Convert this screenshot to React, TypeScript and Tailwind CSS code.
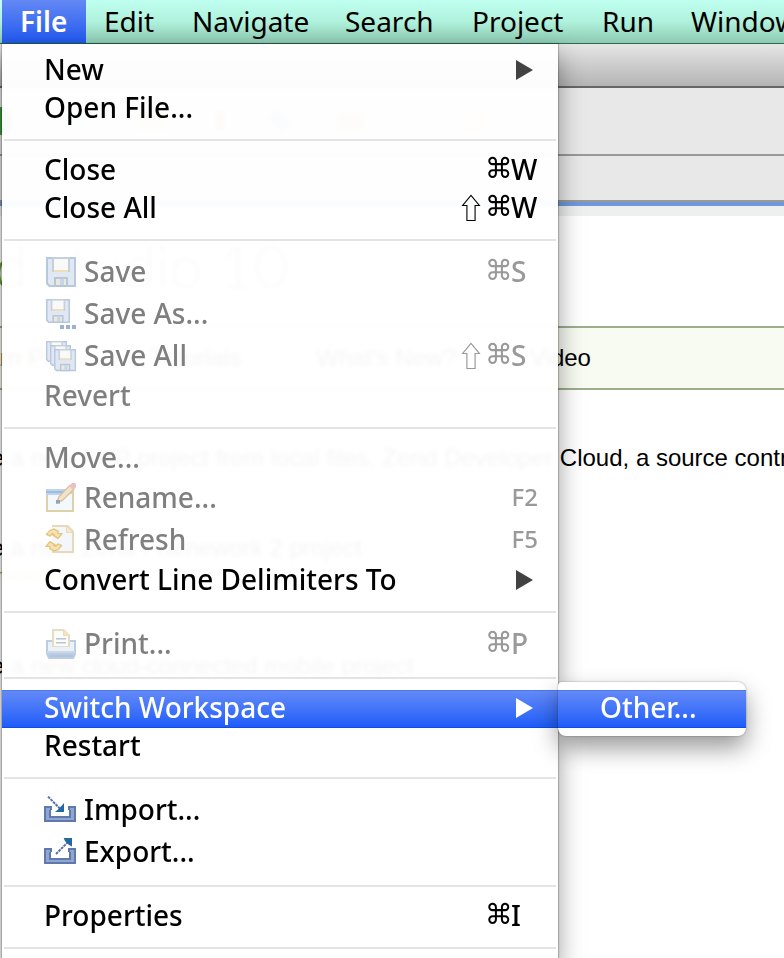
import React from "react";

type IconName = "save" | "saveAs" | "saveAll" | "rename" | "refresh" | "print" | "import" | "export";

type Entry =
  | { kind: "separator" }
  | {
      kind: "item";
      label: string;
      icon?: IconName;
      disabled?: boolean;
      shift?: boolean;
      command?: boolean;
      shortcut?: string;
      submenu?: string[];
      open?: boolean;
    };

const separator: Entry = { kind: "separator" };

const entries: Entry[] = [
  { kind: "item", label: "New", submenu: [] },
  { kind: "item", label: "Open File..." },
  separator,
  { kind: "item", label: "Close", command: true, shortcut: "W" },
  { kind: "item", label: "Close All", shift: true, command: true, shortcut: "W" },
  separator,
  { kind: "item", label: "Save", icon: "save", disabled: true, command: true, shortcut: "S" },
  { kind: "item", label: "Save As...", icon: "saveAs", disabled: true },
  { kind: "item", label: "Save All", icon: "saveAll", disabled: true, shift: true, command: true, shortcut: "S" },
  { kind: "item", label: "Revert", disabled: true },
  separator,
  { kind: "item", label: "Move...", disabled: true },
  { kind: "item", label: "Rename...", icon: "rename", disabled: true, shortcut: "F2" },
  { kind: "item", label: "Refresh", icon: "refresh", disabled: true, shortcut: "F5" },
  { kind: "item", label: "Convert Line Delimiters To", submenu: [] },
  separator,
  { kind: "item", label: "Print...", icon: "print", disabled: true, command: true, shortcut: "P" },
  separator,
  { kind: "item", label: "Switch Workspace", submenu: ["Other..."], open: true },
  { kind: "item", label: "Restart" },
  separator,
  { kind: "item", label: "Import...", icon: "import" },
  { kind: "item", label: "Export...", icon: "export" },
  separator,
  { kind: "item", label: "Properties", command: true, shortcut: "I" },
  separator,
];

function Floppy() {
  return (
    <>
      <path d="M0 0h15v15H1.5L0 13.5z" fill="#b8c8de" />
      <path d="M1 1h13v13H2l-1-1z" fill="#dfe8f3" />
      <path d="M3 0h9v7.5H3z" fill="#c6d0d8" />
      <path d="M4 1h7v5.5H4z" fill="#f8f9f8" />
      <path d="M4 6.5h7v1H4z" fill="#efdfb9" />
      <path d="M4 10h7v5H4z" fill="#b7c6da" />
      <path d="M5 11h5v3H5z" fill="#f1e8d4" />
      <path d="M7 11h2v3H7z" fill="#c3d6ec" />
    </>
  );
}

function Tray() {
  return (
    <>
      <path d="M0 6h4v2H3.500v3h9V8H12V6h4v8H0z" fill="#6079aa" />
      <path d="M1 7h2v1h-.5v4h11V8H13V7h2v6H1z" fill="#8fa5d2" />
    </>
  );
}

function Icon({ name }: { name: IconName }) {
  return (
    <svg viewBox="0 0 16 16" className="h-8 w-8 shrink-0" aria-hidden="true">
      {name === "save" && (
        <g transform="translate(1 .5)">
          <Floppy />
        </g>
      )}
      {name === "saveAs" && (
        <>
          <g transform="translate(1 .5) scale(.8)">
            <Floppy />
          </g>
          <path d="M8 13.500h2v2H8zM11 13.500h2v2h-2zM14 13.500h2v2h-2z" fill="#9db1d2" />
        </>
      )}
      {name === "saveAll" && (
        <>
          <g transform="translate(1 .5) scale(.7)">
            <Floppy />
          </g>
          <g transform="translate(3 2.5) scale(.7)">
            <Floppy />
          </g>
          <g transform="translate(5 4.5) scale(.74)">
            <Floppy />
          </g>
        </>
      )}
      {name === "rename" && (
        <>
          <path d="M1 3.5h14V15H1z" fill="#ddd0ac" />
          <path d="M2 6h12v8H2z" fill="#f3f8fd" />
          <path d="M1 3.500h11v3H1z" fill="#bdd4ea" />
          <path d="M1 4.500h9v1H1z" fill="#9dbddf" />
          <path d="M6.500 10.500l.8-3L13 1.500l2 2-5.800 5.700z" fill="#f1e2ca" stroke="#d8bf9f" strokeWidth=".6" />
          <path d="M12.500 2L14 .5h1.500l.5.500V2.500L14.700 4z" fill="#ecc0c0" />
          <path d="M6 9h2v1.800H6z" fill="#94a2b8" />
        </>
      )}
      {name === "refresh" && (
        <>
          <path d="M4 .5h8l3 3v11H4z" fill="#e6dab9" />
          <path d="M4 1.500h7v3h3v9H4z" fill="#f3f6fa" />
          <path d="M11.500 1.500v2.500h2.500z" fill="#f5ead0" />
          <g fill="#f6e3b4" stroke="#e6c47c" strokeWidth=".7" strokeLinejoin="round">
            <path d="M1.200 5.200L3 3.200 5 2.600 7 3.600v1.200h2L7 7.200 4.200 5.300h1L4.200 4.800 3 6z" />
            <path d="M8.800 10.800L7 12.800 5 13.400 3 12.400v-1.200H1L3 8.800l2.800 1.900h-1l1 .5L7 10z" />
          </g>
        </>
      )}
      {name === "print" && (
        <>
          <path d="M1 6h15v7l-1 2.500H2.200L1 13z" fill="#bccce1" />
          <path d="M2 7h13v5H2z" fill="#eaf1f8" />
          <path d="M1.500 11.500h14v1h-14z" fill="#c9d8ea" />
          <path d="M2.500 13.500h12v1h-12z" fill="#afc4dd" />
          <path d="M4 .5h6L13 3.500v6H4z" fill="#e4dcc3" />
          <path d="M5 1.500h4.500V4H12v5H5z" fill="#fbfbf8" />
          <path d="M10 .8V3.500h2.700z" fill="#f2e3b8" />
          <path d="M6 5h5v.8H6zM6 7h5v.8H6z" fill="#bac6d8" />
        </>
      )}
      {name === "import" && (
        <>
          <Tray />
          <path d="M2 1.300l6.500 6.500" stroke="#5b6fae" strokeWidth="1" strokeDasharray="1.400 .4" />
          <path d="M10 4.500V9H5.500L7 7.700 8.500 6.200z" fill="#23699f" />
        </>
      )}
      {name === "export" && (
        <>
          <Tray />
          <path d="M6 9l6-6" stroke="#5b6fae" strokeWidth="1" strokeDasharray="1.400 .4" />
          <path d="M9.800 1H14v4.200l-1.500-.7-2-2z" fill="#23699f" />
        </>
      )}
    </svg>
  );
}

function MenuRow({ entry }: { entry: Entry }) {
  if (entry.kind === "separator") {
    return <li role="separator" className="mx-[2px] my-[11px] h-[2px] bg-[#e3e3e3]" />;
  }
  const { label, icon, disabled, shift, command, shortcut, submenu, open } = entry;
  const tone = open
    ? "border-t border-b border-t-[#4f78e6] border-b-[#0d4de6] bg-linear-to-b from-[#6389f8] to-[#1c5cf9] text-white"
    : disabled
      ? "text-[#7f7f7f]"
      : "text-black";
  const keyTone = disabled ? "text-[#999]" : "text-black";
  return (
    <li role="none" className="relative">
      <button
        type="button"
        role="menuitem"
        disabled={disabled}
        className={`flex w-full items-center gap-2 pr-5 pb-[2px] pl-[42px] text-left whitespace-nowrap ${icon ? "h-[42px]" : "h-[38px]"} ${tone}`}
      >
        {icon && <Icon name={icon} />}
        <span className="flex-1 pb-[2px]">{label}</span>
        {submenu && (
          <svg viewBox="0 0 17 20" className="mr-[5px] h-5 w-[17px]" aria-hidden="true">
            <path d="M0 0l17 10L0 20z" fill={open ? "#fff" : "#424242"} />
          </svg>
        )}
        {shortcut && (
          <span className={`flex items-center pb-[2px] ${keyTone}`}>
            {shift && <span className="w-7 font-['Noto_Sans_CJK_JP','DejaVu_Sans',sans-serif]">⇧</span>}
            {command && <span className="w-[26px] font-['DejaVu_Sans',sans-serif]">⌘</span>}
            {command ? <span className="w-[27px]">{shortcut}</span> : <span className="text-2xl">{shortcut}</span>}
          </span>
        )}
      </button>
      {open && submenu && (
        <ul
          role="menu"
          className="absolute -top-2 left-full w-[188px] rounded-lg rounded-tl-sm bg-white py-2 shadow-[0_0_2px_rgba(0,0,0,0.4),0_12px_24px_rgba(0,0,0,0.4)]"
        >
          {submenu.map((child) => (
            <li key={child} role="none">
              <button type="button" role="menuitem" className={`flex h-[38px] w-full items-center pb-1 pl-[42px] text-left ${tone}`}>
                {child}
              </button>
            </li>
          ))}
        </ul>
      )}
    </li>
  );
}

function Workbench() {
  return (
    <main className="font-['Liberation_Sans',Arial,sans-serif] text-2xl whitespace-nowrap text-black">
      <div className="h-11 border-b-2 border-[#666] bg-linear-to-b from-[#e6e6e6] to-[#b4b4b4]" />
      <div className="flex h-[68px] items-center gap-12 border-b-2 border-[#999] bg-[#e8e8e8]">
        <span className="h-7 w-3 rounded-r-full bg-[#3d9a3d]" />
        <span className="h-5 w-7 bg-[#c9d6e6]" />
        <span className="h-6 w-8 bg-[#e8cf9a]" />
        <span className="h-5 w-2 bg-[#c08a4a]" />
        <span className="h-6 w-4 -rotate-45 bg-[#9fb6da]" />
        <span className="h-5 w-7 bg-[#e0b878]" />
        <span className="ml-12 h-6 w-8 rounded-full bg-[#f0d9a8]" />
      </div>
      <div className="h-[46px] border-b-2 border-[#999] bg-[#e8e8e8]" />
      <div className="h-1 bg-[#6f98dc]" />
      <div className="h-[10px] bg-[#eeefef]" />
      <h1 className="-ml-24 flex h-[110px] items-center pb-3 font-['Lato',sans-serif] text-6xl font-light text-[#777]">
        <span className="text-[#5fa32c]">zend</span>&nbsp;studio 10
      </h1>
      <nav className="flex h-16 items-center border-y-2 border-[#9cae8c] bg-[#f8fbf2]">
        <a href="#php" className="-ml-10 w-[190px]">Learn PHP</a>
        <a href="#tutorials" className="w-[166px]">Tutorials</a>
        <a href="#new" className="w-[214px]">What's New?</a>
        <a href="#video">Video</a>
      </nav>
      <div className="-ml-[68px] pt-[50px]">
        <p className="h-[90px] leading-9">
          Create a new PHP project from local files, Zend Developer Cloud, a source control
        </p>
        <p className="h-[118px] leading-9">
          Create a new Zend Framework 2 project
          <span className="block text-base leading-5 text-[#8a9a20]">Zend Framework more</span>
        </p>
        <p className="leading-9">Create a new cloud-connected mobile project</p>
      </div>
    </main>
  );
}

export default function App() {
  return (
    <div className="relative h-screen overflow-hidden bg-white font-['Noto_Sans','Lucida_Grande',sans-serif] text-[28px] leading-9">
      <nav
        aria-label="Menu bar"
        className="grid h-11 grid-cols-[84px_88px_153px_127px_130px_89px_auto] overflow-hidden border-b border-[#2f6b53] bg-linear-to-b from-[#bffff0] via-[#aff2dc] to-[#8ec9b3] pl-[2px] whitespace-nowrap"
      >
        {["File", "Edit", "Navigate", "Search", "Project", "Run", "Window"].map((name) => (
          <button
            key={name}
            type="button"
            className={
              name === "File"
                ? "bg-linear-to-b from-[#6488f4] to-[#1f57ee] pb-[2px] pl-[18px] text-left font-semibold text-white"
                : "pb-[2px] pl-[18px] text-left text-black"
            }
          >
            {name}
          </button>
        ))}
      </nav>
      <Workbench />
      <ul
        role="menu"
        aria-label="File"
        className="absolute top-11 left-[2px] w-[556px] bg-white/96 pt-2 font-medium shadow-[0_0_1px_1px_rgba(0,0,0,0.2),0_12px_24px_rgba(0,0,0,0.4)] backdrop-blur-[2px]"
      >
        {entries.map((entry, index) => (
          <MenuRow key={index} entry={entry} />
        ))}
      </ul>
    </div>
  );
}
